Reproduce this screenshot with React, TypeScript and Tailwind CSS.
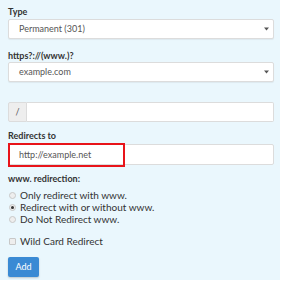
import React from 'react';

const Caret = () => (
  <svg width="5" height="4" viewBox="0 0 5 4" className="absolute right-[4px] top-1/2 -translate-y-1/2">
    <path d="M0 0.5 H5 L2.5 3.5 Z" fill="#555" />
  </svg>
);

const Radio: React.FC<{ checked?: boolean; label: string }> = ({ checked, label }) => (
  <div className="flex h-[12px] items-center">
    <span className="ml-[1px] flex h-[7px] w-[7px] items-center justify-center rounded-full border border-[#c8c8c8] bg-[#eeeeee]">
      {checked && <span className="h-[3px] w-[3px] rounded-full bg-[#333]" />}
    </span>
    <span className="ml-[4px] text-[10px] text-[#333]">{label}</span>
  </div>
);

const App: React.FC = () => {
  return (
    <div className="h-[285px] w-[283px] bg-white" style={{ fontFamily: 'Lato, "Open Sans", sans-serif' }}>
      <div className="flex h-[280px] w-[280px] flex-col bg-[#eaf7fd] px-[8px] pt-[6px]">
        {/* Type */}
        <label className="h-[11px] text-[9px] font-bold leading-[11px] text-[#333]">Type</label>
        <div className="relative mt-[2px] flex h-[20px] w-[266px] items-center rounded-[2px] border border-[#dcdcdc] bg-white pl-[10px] text-[9px] text-[#555] shadow-[0_1px_1px_rgba(0,0,0,0.06)]">
          Permanent (301)
          <Caret />
        </div>

        {/* Host */}
        <label className="mt-[11px] h-[11px] text-[9px] font-bold leading-[11px] text-[#333]">https?://(www.)?</label>
        <div className="relative mt-[1px] flex h-[20px] w-[266px] items-center rounded-[2px] border border-[#dcdcdc] bg-white pl-[10px] text-[9px] text-[#555] shadow-[0_1px_1px_rgba(0,0,0,0.06)]">
          example.com
          <Caret />
        </div>

        {/* Path */}
        <div className="mt-[20px] flex h-[20px] w-[266px]">
          <div className="flex w-[19px] items-center justify-center rounded-l-[2px] border border-[#dcdcdc] bg-[#eeeeee] text-[9px] text-[#555]">/</div>
          <div className="flex-1 rounded-r-[2px] border border-l-0 border-[#dcdcdc] bg-white" />
        </div>

        {/* Redirects to */}
        <label className="mt-[8px] h-[11px] text-[9px] font-bold leading-[11px] text-[#333]">Redirects to</label>
        <div className="relative mt-[3px] flex h-[21px] w-[266px] items-center rounded-[2px] border border-[#dcdcdc] bg-white pl-[10px] text-[9px] text-[#555]">
          http://example.net
          <div className="absolute -left-[1px] -top-[2px] h-[24px] w-[117px] border-2 border-[#e8141a]" />
        </div>

        {/* www redirection */}
        <label className="mt-[8px] h-[11px] text-[9px] font-bold leading-[11px] text-[#333]">www. redirection:</label>
        <div className="mt-[5px] flex flex-col">
          <Radio label="Only redirect with www." />
          <Radio checked label="Redirect with or without www." />
          <Radio label="Do Not Redirect www." />
        </div>

        <div className="mt-[10px] flex h-[12px] items-center">
          <span className="ml-[1px] h-[7px] w-[7px] rounded-[1px] border border-[#c8c8c8] bg-[#eeeeee]" />
          <span className="ml-[4px] text-[10px] text-[#333]">Wild Card Redirect</span>
        </div>

        <button className="mt-[10px] flex h-[20px] w-[31px] items-center justify-center rounded-[2px] bg-[#3a8ad4] text-[9px] text-white shadow-[0_1px_2px_rgba(0,0,0,0.2)]">
          Add
        </button>
      </div>
    </div>
  );
};

export default App;
